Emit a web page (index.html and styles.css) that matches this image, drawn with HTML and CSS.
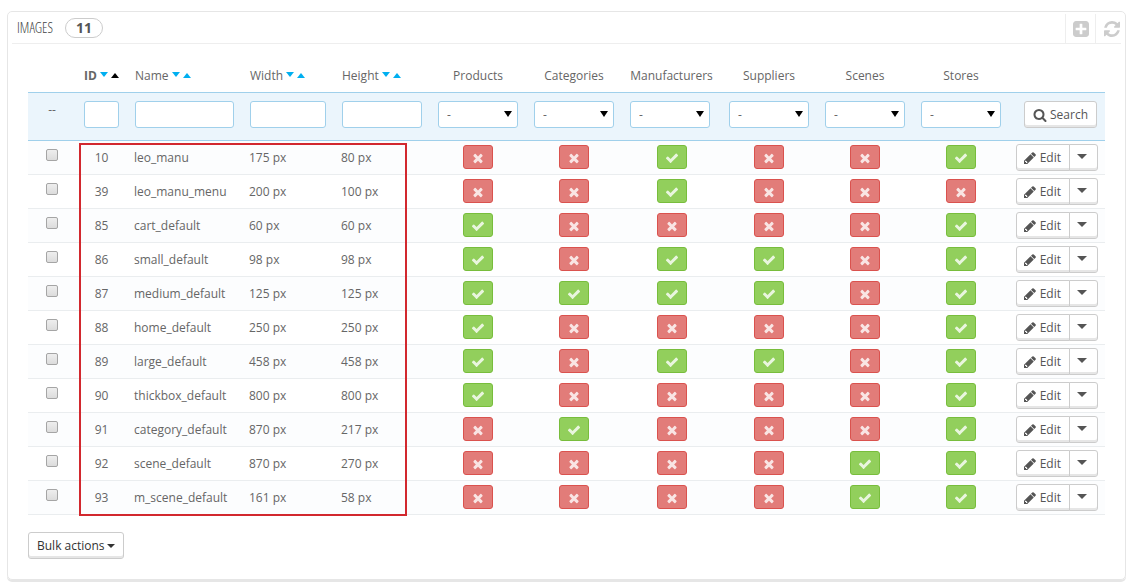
FILE: index.html
```html
<!DOCTYPE html>
<html lang="en">
<head>
  <meta charset="UTF-8">
  <meta name="viewport" content="width=device-width, initial-scale=1.0">
  <title>Images</title>
  <link rel="stylesheet" href="styles.css">
</head>
<body>
  <!-- Icon set -->
  <svg class="icon-set" aria-hidden="true">
    <symbol id="check" viewBox="0 0 1792 1792"><path d="M1671 566q0 40-28 68l-724 724-136 136q-28 28-68 28t-68-28l-136-136-362-362q-28-28-28-68t28-68l136-136q28-28 68-28t68 28l294 295 656-657q28-28 68-28t68 28l136 136q28 28 28 68z"/></symbol>
    <symbol id="remove" viewBox="0 0 1792 1792"><path d="M1490 1322q0 40-28 68l-136 136q-28 28-68 28t-68-28l-294-294-294 294q-28 28-68 28t-68-28l-136-136q-28-28-28-68t28-68l294-294-294-294q-28-28-28-68t28-68l136-136q28-28 68-28t68 28l294 294 294-294q28-28 68-28t68 28l136 136q28 28 28 68t-28 68l-294 294 294 294q28 28 28 68z"/></symbol>
    <symbol id="search" viewBox="0 0 1792 1792"><path d="M1216 832q0-185-131.500-316.500t-316.500-131.500-316.500 131.500-131.500 316.500 131.500 316.500 316.500 131.500 316.500-131.500 131.500-316.500zm512 832q0 52-38 90t-90 38q-54 0-90-38l-343-342q-179 124-399 124-143 0-273.500-55.500t-225-150-150-225-55.500-273.500 55.500-273.500 150-225 225-150 273.500-55.500 273.500 55.500 225 150 150 225 55.500 273.500q0 220-124 399l343 343q37 37 37 90z"/></symbol>
    <symbol id="pencil" viewBox="0 0 1792 1792"><path d="M491 1536l91-91-235-235-91 91v107h128v128h107zm469-1120l416 416-832 832h-416v-416zm683 96q0 53-37 90l-166 166-416-416 166-165q36-38 90-38 53 0 91 38l235 234q37 39 37 91z"/></symbol>
    <symbol id="plus" viewBox="128 128 1536 1536"><path d="M1408 960v-128q0-26-19-45t-45-19h-320v-320q0-26-19-45t-45-19h-128q-26 0-45 19t-19 45v320h-320q-26 0-45 19t-19 45v128q0 26 19 45t45 19h320v320q0 26 19 45t45 19h128q26 0 45-19t19-45v-320h320q26 0 45-19t19-45zm256-544v960q0 119-84.500 203.500t-203.500 84.500h-960q-119 0-203.500-84.500t-84.500-203.500v-960q0-119 84.500-203.500t203.500-84.500h960q119 0 203.500 84.500t84.500 203.500z"/></symbol>
    <symbol id="refresh" viewBox="128 128 1536 1536"><path d="M1639 1056q0 5-1 7-64 268-268 434.500t-478 166.500q-146 0-282.500-55t-243.500-157l-129 129q-19 19-45 19t-45-19-19-45v-448q0-26 19-45t45-19h448q26 0 45 19t19 45-19 45l-137 137q71 66 161 102t187 36q134 0 250-65t186-179q11-17 53-117 8-23 30-23h192q13 0 22.500 9.500t9.500 22.500zm25-800v448q0 26-19 45t-45 19h-448q-26 0-45-19t-19-45 19-45l138-138q-148-137-349-137-134 0-250 65t-186 179q-11 17-53 117-8 23-30 23h-199q-13 0-22.500-9.500t-9.500-22.500v-7q65-268 270-434.500t480-166.500q146 0 284 55.500t245 156.500l130-129q19-19 45-19t45 19 19 45z"/></symbol>
  </svg>

  <main class="panel">
    <header class="panel-heading">
      <h1 class="panel-title">IMAGES</h1>
      <span class="badge">11</span>
      <div class="panel-actions">
        <a href="#" class="panel-action" aria-label="Add new"><svg class="icon-big"><use href="#plus"/></svg></a>
        <a href="#" class="panel-action" aria-label="Refresh list"><svg class="icon-big"><use href="#refresh"/></svg></a>
      </div>
    </header>

    <div class="table-wrap">
      <table class="table">
        <colgroup>
          <col class="col-check">
          <col class="col-id">
          <col class="col-name">
          <col class="col-width">
          <col class="col-flag">
          <col class="col-flag">
          <col class="col-flag">
          <col class="col-manufacturers">
          <col class="col-flag">
          <col class="col-flag">
          <col class="col-flag">
          <col class="col-flag">
        </colgroup>
        <thead>
          <tr class="titles">
            <th></th>
            <th class="sorted">ID<a href="#" class="sort down" aria-label="Sort ID descending"></a><a href="#" class="sort up active" aria-label="Sort ID ascending"></a></th>
            <th>Name<a href="#" class="sort down" aria-label="Sort name descending"></a><a href="#" class="sort up" aria-label="Sort name ascending"></a></th>
            <th>Width<a href="#" class="sort down" aria-label="Sort width descending"></a><a href="#" class="sort up" aria-label="Sort width ascending"></a></th>
            <th>Height<a href="#" class="sort down" aria-label="Sort height descending"></a><a href="#" class="sort up" aria-label="Sort height ascending"></a></th>
            <th class="center">Products</th>
            <th class="center">Categories</th>
            <th class="center">Manufacturers</th>
            <th class="center">Suppliers</th>
            <th class="center">Scenes</th>
            <th class="center">Stores</th>
            <th></th>
          </tr>
          <tr class="filters" id="filters">
            <td class="center">--</td>
            <td><input type="text" class="filter" aria-label="ID"></td>
            <td><input type="text" class="filter" aria-label="Name"></td>
            <td><input type="text" class="filter" aria-label="Width"></td>
            <td><input type="text" class="filter" aria-label="Height"></td>
          </tr>
        </thead>
        <tbody id="rows"></tbody>
      </table>
      <div class="highlight"></div>
    </div>

    <button type="button" class="btn bulk">Bulk actions <span class="caret"></span></button>
  </main>

  <script>
    const flags = ['Products', 'Categories', 'Manufacturers', 'Suppliers', 'Scenes', 'Stores'];

    // id, name, width, height, one digit per flag column
    const images = [
      [10, 'leo_manu', 175, 80, '001001'],
      [39, 'leo_manu_menu', 200, 100, '001000'],
      [85, 'cart_default', 60, 60, '100001'],
      [86, 'small_default', 98, 98, '101101'],
      [87, 'medium_default', 125, 125, '111101'],
      [88, 'home_default', 250, 250, '100001'],
      [89, 'large_default', 458, 458, '101101'],
      [90, 'thickbox_default', 800, 800, '100001'],
      [91, 'category_default', 870, 217, '010001'],
      [92, 'scene_default', 870, 270, '000011'],
      [93, 'm_scene_default', 161, 58, '000011'],
    ];

    function flagCell(value, i) {
      const on = value === '1';
      return `<td class="center flag-cell">
        <button type="button" class="status ${on ? 'enabled' : 'disabled'}" aria-label="${flags[i]}">
          <svg class="icon"><use href="#${on ? 'check' : 'remove'}"/></svg>
        </button>
      </td>`;
    }

    document.querySelector('#filters').insertAdjacentHTML('beforeend',
      flags.map(flag => `<td><div class="select-box">
        <select class="filter" aria-label="${flag}"><option>-</option><option>Yes</option><option>No</option></select>
      </div></td>`).join('') +
      `<td class="actions"><button type="button" class="btn"><svg class="icon"><use href="#search"/></svg>Search</button></td>`);

    document.querySelector('#rows').innerHTML = images.map(([id, name, width, height, values]) => `<tr>
      <td class="check-cell"><input type="checkbox" class="check" aria-label="${name}"></td>
      <td class="center">${id}</td>
      <td>${name}</td>
      <td>${width} px</td>
      <td>${height} px</td>
      ${values.split('').map(flagCell).join('')}
      <td class="actions"><div class="btn-group">
        <button type="button" class="btn btn-edit"><svg class="icon"><use href="#pencil"/></svg>Edit</button>
        <button type="button" class="btn btn-toggle" aria-label="More actions"><span class="caret"></span></button>
      </div></td>
    </tr>`).join('');
  </script>
</body>
</html>
```
FILE: styles.css
```css
* {
  box-sizing: border-box;
}

body {
  margin: 0;
  padding: 11px 7px 5px;
  background-color: #fff;
  color: #666;
  font-family: "Open Sans", "Noto Sans", sans-serif;
  font-size: 12px;
  line-height: 17px;
}

button,
input,
select {
  font: inherit;
  color: inherit;
  margin: 0;
}

.icon-set {
  display: none;
}

.icon {
  width: 14px;
  height: 14px;
  fill: currentColor;
  flex: none;
}

.icon-big {
  width: 16px;
  height: 16px;
  fill: #ccc;
}

/* Panel */
.panel {
  border: 1px solid #e6e6e6;
  border-radius: 5px;
  box-shadow: 0 2px 0 #e6e6e6;
  padding: 0 20px 20px;
}

.panel-heading {
  display: flex;
  align-items: center;
  height: 32px;
  margin: 0 -16px;
  padding-left: 5px;
  border-bottom: 1px solid #eee;
}

.panel-title {
  min-width: 40px;
  margin: 0;
  font-family: "Open Sans Condensed Light", "Open Sans Condensed", "Open Sans", sans-serif;
  font-size: 14px;
  font-weight: 300;
  color: #444;
}

.badge {
  margin-left: 8px;
  width: 38px;
  height: 20px;
  border: 1px solid #ccc;
  border-radius: 10px;
  font-size: 14px;
  font-weight: bold;
  line-height: 18px;
  text-align: center;
  color: #555;
}

.panel-actions {
  display: flex;
  align-self: flex-end;
  margin-left: auto;
}

.panel-action {
  display: flex;
  align-items: center;
  justify-content: center;
  width: 30px;
  height: 29px;
  border-left: 1px solid #eee;
}

.panel-action:last-child {
  width: 26px;
  justify-content: flex-end;
  padding-right: 1px;
}

/* Table */
.table-wrap {
  position: relative;
  margin-top: 15px;
}

.table {
  width: 100%;
  table-layout: fixed;
  border-collapse: separate;
  border-spacing: 0;
}

.col-check { width: 48px; }
.col-id { width: 51px; }
.col-name { width: 115px; }
.col-width { width: 92px; }
.col-flag { width: 96px; }
.col-manufacturers { width: 99px; }

.table th {
  height: 34px;
  padding: 0 8px;
  font-weight: normal;
  text-align: left;
  white-space: nowrap;
  border-bottom: 1px solid #a0d0eb;
}

.table .sorted {
  font-weight: bold;
}

.table td {
  height: 34px;
  padding: 3px 7px;
  border-bottom: 1px solid #eaedef;
  white-space: nowrap;
}

.table .center {
  text-align: center;
}

.table .actions {
  padding-left: 0;
}

tbody tr:nth-child(odd) {
  background-color: #fcfdfe;
}

.filters {
  background-color: #ebf5fc;
}

.table .filters td {
  height: 48px;
  padding: 8px 8px 12px;
  border-bottom-color: #a0d0eb;
  vertical-align: top;
}

.sort {
  display: inline-block;
  margin-left: 3px;
  border: 4px solid transparent;
}

.down {
  border-top: 5px solid #00aff0;
  border-bottom: 0;
  vertical-align: 3px;
}

.up {
  border-bottom: 5px solid #00aff0;
  border-top: 0;
  vertical-align: 2px;
}

.up.active {
  border-bottom-color: #000;
}

.filter {
  display: block;
  width: 100%;
  height: 27px;
  padding: 0 8px;
  border: 1px solid #a0d0eb;
  border-radius: 3px;
  background-color: #fff;
  appearance: none;
}

.select-box {
  position: relative;
  width: 80px;
}

.select-box::after {
  content: "";
  position: absolute;
  top: 10px;
  right: 6px;
  border: 4px solid transparent;
  border-top: 6px solid #000;
  border-bottom: 0;
  pointer-events: none;
}

.table .check-cell {
  padding-top: 8px;
  text-align: center;
  vertical-align: top;
}

.check {
  display: block;
  width: 12px;
  height: 12px;
  margin: 0 auto;
  border: 1px solid #a5a5a5;
  border-radius: 2px;
  background: linear-gradient(#eee, #dcdcdc);
  appearance: none;
}

.check:checked {
  background: #00aff0;
}

.table .flag-cell {
  padding-top: 4px;
  vertical-align: top;
}

.status {
  display: flex;
  align-items: center;
  justify-content: center;
  width: 30px;
  height: 24px;
  margin: 0 auto;
  padding: 2px 0 0;
  border: 1px solid;
  border-radius: 3px;
  cursor: pointer;
}

.status .icon {
  fill: rgba(255, 255, 255, 0.8);
}

.enabled {
  background-color: #92cf5c;
  border-color: #78bd3c;
}

.disabled {
  background-color: #e27c79;
  border-color: #da524e;
}

/* Outline around the id, name and size columns */
.highlight {
  position: absolute;
  top: 84px;
  left: 51px;
  width: 328px;
  bottom: -1px;
  border: 2px solid #d2282e;
  pointer-events: none;
}

/* Buttons */
.btn {
  display: inline-flex;
  align-items: center;
  height: 27px;
  padding: 0 8px;
  border: 1px solid #ccc;
  border-radius: 3px;
  background-color: #fff;
  box-shadow: inset 0 -2px 0 #e6e6e6;
  color: #555;
  cursor: pointer;
}

.btn .icon {
  margin-right: 3px;
}

.actions {
  text-align: right;
}

.btn-group {
  display: flex;
  justify-content: flex-end;
}

.btn-edit {
  padding: 0 8px 0 6px;
  border-radius: 3px 0 0 3px;
}

.btn-toggle {
  margin-left: -1px;
  padding: 0 10px 0 7px;
  border-radius: 0 3px 3px 0;
}

.caret {
  border: 4px solid transparent;
  border-top-color: currentColor;
  border-bottom: 0;
}

.btn-toggle .caret {
  border-width: 5px 5px 0;
  margin-bottom: 3px;
}

.bulk {
  margin-top: 17px;
  color: #333;
}

.bulk .caret {
  margin-left: 2px;
}
```
